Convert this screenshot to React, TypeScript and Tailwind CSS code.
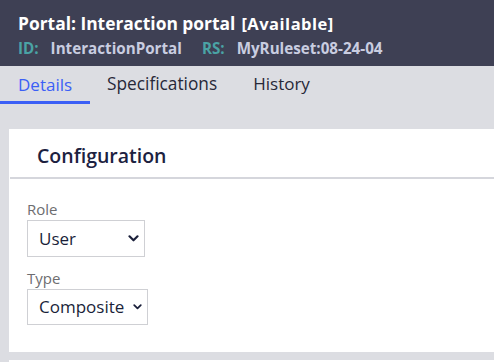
import React from "react";

const Chevron = ({ w = 10 }: { w?: number }) => (
  <svg width={w} height={w * 0.65} viewBox="0 0 12 8" className="shrink-0">
    <path d="M1.5 1.5 L6 6 L10.5 1.5" fill="none" stroke="#1a1f3a" strokeWidth="2.4" strokeLinecap="round" strokeLinejoin="round" />
  </svg>
);

export default function App() {
  return (
    <div className="w-[494px] h-[362px] overflow-hidden bg-[#dcdde2] flex flex-col" style={{ fontFamily: '"Open Sans", "Noto Sans", sans-serif' }}>
      <div className="h-[66px] bg-[#3e4054] pl-[18px] pt-[9px] flex flex-col shrink-0 whitespace-nowrap">
        <div className="flex items-baseline text-white font-bold">
          <span className="text-[17.4px] leading-[28px]">Portal: Interaction portal</span>
          <span className="text-[16.5px] ml-[6px] tracking-[0.5px]">[Available]</span>
        </div>
        <div className="flex items-baseline text-[15.2px] font-bold leading-[22px]">
          <span className="text-[#4aa3a5]">ID:</span>
          <span className="text-[#c9cde0] ml-[12px]">InteractionPortal</span>
          <span className="text-[#4aa3a5] ml-[20px]">RS:</span>
          <span className="text-[#c9cde0] ml-[12px]">MyRuleset:08-24-04</span>
        </div>
      </div>
      <div className="h-[38px] flex items-stretch shrink-0 text-[17px] whitespace-nowrap">
        <div className="px-[18px] flex items-center text-[#3b5ff6] border-b-[3px] border-[#3b5ff6] pt-[3px] w-[90px]">Details</div>
        <div className="pl-[17px] pr-[19px] flex items-center text-[#272838] pb-[3px] text-[17.3px]">Specifications</div>
        <div className="px-[17px] flex items-center text-[#272838] pb-[3px]">History</div>
      </div>
      <div className="h-[25px] shrink-0" />
      <div className="ml-[9px] bg-white h-[223px] shrink-0 flex flex-col">
        <div className="h-[48px] flex items-center pl-[28px] pt-[6px] text-[19.5px] font-semibold text-[#1c2140]">Configuration</div>
        <div className="h-[2px] bg-[#d5d6dc] ml-[1px]" />
        <div className="pl-[18px] pt-[19px] flex flex-col">
          <div className="text-[15px] text-[#6d6d70] leading-[22px]">Role</div>
          <div className="w-[118px] h-[37px] border border-[#cfd0d4] flex items-center justify-between pl-[11px] pr-[5px] text-[17px] text-[#1a1f3a]">
            <span>User</span>
            <Chevron w={11} />
          </div>
          <div className="text-[15px] text-[#6d6d70] leading-[22px] mt-[10px]">Type</div>
          <div className="w-[121px] h-[36px] border border-[#cfd0d4] flex items-center justify-between pl-[11px] pr-[5px] text-[17px] text-[#1a1f3a] whitespace-nowrap">
            <span>Composite</span>
            <Chevron w={9} />
          </div>
        </div>
      </div>
      <div className="h-[8px] shrink-0" />
      <div className="ml-[9px] bg-white flex-1" />
    </div>
  );
}
